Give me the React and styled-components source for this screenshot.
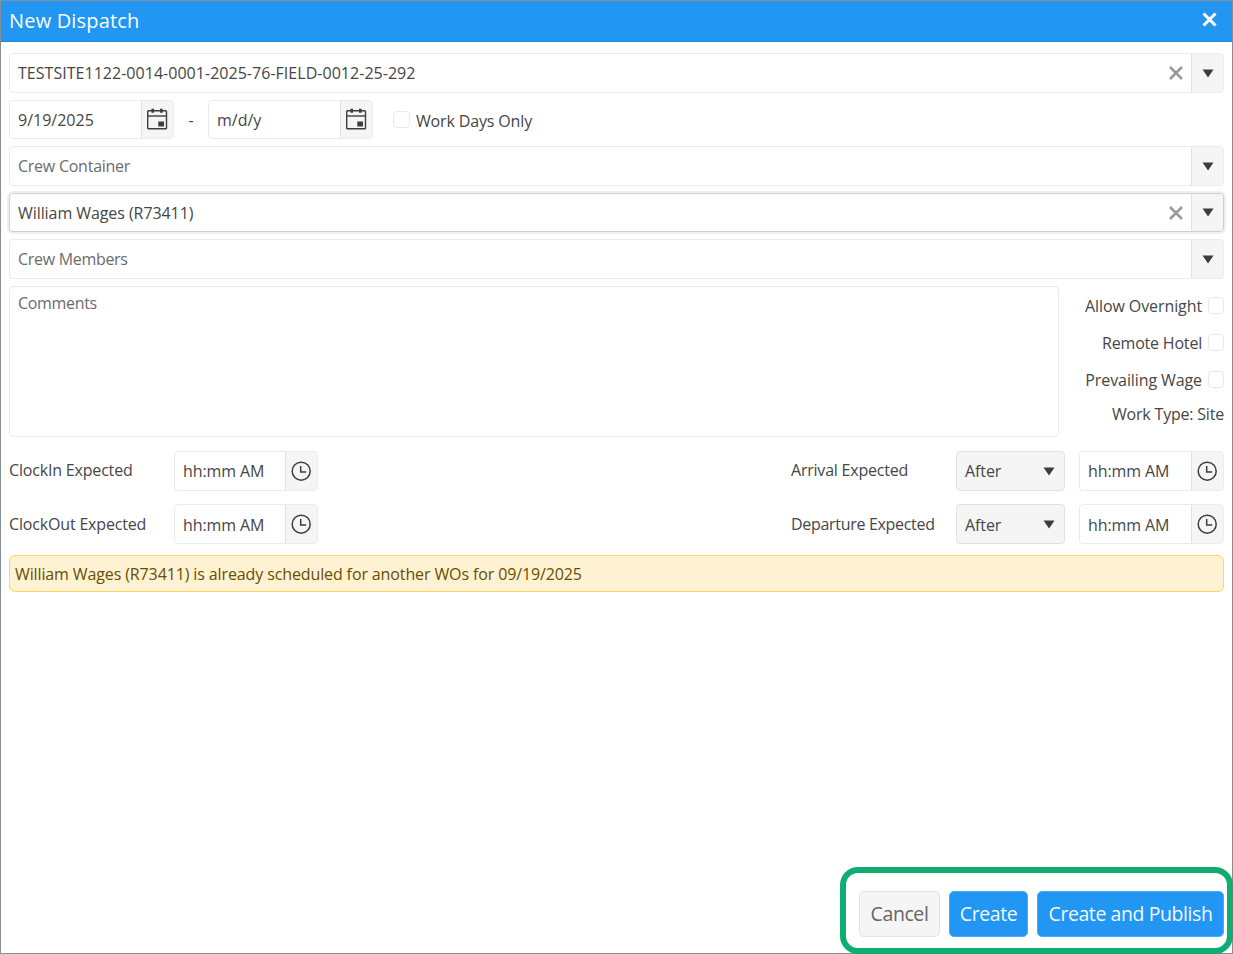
import React from "react";
import styled, { createGlobalStyle } from "styled-components";

const GlobalStyle = createGlobalStyle`
    * {
        box-sizing: border-box;
    }

    body {
        margin: 0;
        font-family: "Open Sans", "Noto Sans", sans-serif;
        font-size: 16px;
        color: #464646;
        background: #fff;
    }
`;

const Window = styled.div`
    width: 1233px;
    height: 954px;
    position: relative;
    display: flex;
    flex-direction: column;
    border: 1px solid #868e96;
    background: #fff;
`;

const TitleBar = styled.header`
    flex: 0 0 41px;
    display: flex;
    justify-content: space-between;
    align-items: center;
    padding: 0 15px 0 8px;
    color: #fff;
    background: #2196f3;
    border-bottom: 1px solid #1e88dc;

    svg {
        display: block;
        margin-bottom: 3px;
    }
`;

const Title = styled.h1`
    margin: 0;
    font-size: 20px;
    font-weight: 400;
    line-height: 26px;
    letter-spacing: 0.17px;
`;

const Text = styled.span`
    flex: 1 1 auto;
    padding-top: ${({$drop}) => $drop || 0}px;
    line-height: 20px;
    white-space: nowrap;
    letter-spacing: ${({$spacing}) => $spacing || 0}px;
    color: ${({$muted}) => ($muted ? "#6c6c6c" : "inherit")};
`;

const Content = styled.main`
    flex: 1;
    display: flex;
    flex-direction: column;
    padding: 11px 8px 0;
`;

const Field = styled.div`
    flex: 0 0 auto;
    width: ${({$width}) => ($width ? `${$width}px` : "auto")};
    height: ${({$height}) => $height || 40}px;
    display: flex;
    align-items: center;
    padding-left: 8px;
    border: 1px solid ${({$focused}) => ($focused ? "#cfcfcf" : "#ebebeb")};
    border-radius: 4px;
    box-shadow: ${({$focused}) => ($focused ? "0 0 0 2px #f0f0f0" : "none")};
    background: #fff;
`;

const FieldButton = styled.span`
    flex: 0 0 32px;
    align-self: stretch;
    display: flex;
    align-items: center;
    justify-content: center;
    padding-bottom: ${({$raised}) => ($raised ? 2 : 0)}px;
    background: #f5f5f5;
    border-left: 1px solid #e2e2e2;
    border-radius: 0 3px 3px 0;
`;

const Stack = styled.div`
    display: flex;
    flex-direction: column;
    gap: 7px;
`;

const DateRow = styled.div`
    display: flex;
    align-items: center;
    height: 39px;
`;

const Dash = styled.span`
    width: 34px;
    text-align: center;
`;

const ClearIcon = styled.svg`
    flex: none;
    display: block;
    margin-right: 8px;
`;

const Check = styled.label`
    display: flex;
    align-items: center;
    gap: 6px;
    height: 17px;
    margin-left: ${({$indent}) => $indent || 0}px;
`;

const Box = styled.span`
    flex: none;
    width: ${({$wide}) => ($wide ? 17 : 16)}px;
    height: 17px;
    border: 1px solid #e8e8e8;
    border-radius: 4px;
    background: #fff;
`;

const CommentsRow = styled.div`
    display: flex;
    justify-content: space-between;
    height: 151px;
`;

const Comments = styled.div`
    width: 1050px;
    padding: 6px 8px;
    display: flex;
    border: 1px solid #ebebeb;
    border-radius: 4px;
`;

const Options = styled.div`
    display: flex;
    flex-direction: column;
    align-items: flex-end;
    gap: 20px;
    padding-top: 11px;
`;

const WorkType = styled.div`
    margin-top: -4px;
    line-height: 20px;
`;

const Times = styled.div`
    display: grid;
    grid-template-columns: 165px 144px 473px 165px 109px 14px 145px;
    grid-auto-rows: 40px;
    row-gap: 13px;
    margin-top: 14px;
`;

const TimeLabel = styled.div`
    grid-column: ${({$column}) => $column};
    display: flex;
    align-items: center;
    padding-bottom: ${({$lift}) => $lift || 0}px;
`;

const TimeCell = styled.div`
    grid-column: ${({$column}) => $column};
`;

const Picker = styled.div`
    grid-column: 5;
    display: flex;
    align-items: center;
    padding: 0 9px 0 8px;
    background: #f5f5f5;
    border: 1px solid #e2e2e2;
    border-radius: 4px;
`;

const Alert = styled.div`
    height: 37px;
    margin-top: 11px;
    padding: 0 5px;
    display: flex;
    align-items: center;
    color: #664f00;
    background: #fff2d3;
    border: 1px solid #ffd760;
    border-radius: 6px;
`;

const Actions = styled.footer`
    position: absolute;
    right: -1px;
    bottom: -1px;
    width: 393px;
    height: 87px;
    display: flex;
    align-items: flex-start;
    gap: 9px;
    padding: 18px 3px 0 13px;
    border: 6px solid #0fae70;
    border-radius: 18px;
`;

const Button = styled.button`
    width: ${({$width}) => $width}px;
    height: 46px;
    padding: 0 0 2px;
    font-family: inherit;
    font-size: 19.5px;
    white-space: nowrap;
    letter-spacing: -0.42px;
    color: ${({$primary}) => ($primary ? "#f2f8ff" : "#666")};
    background: ${({$primary}) => ($primary ? "#2196f3" : "#f5f5f5")};
    border: 1px solid ${({$primary}) => ($primary ? "#4aaaf5" : "#e4e4e4")};
    border-radius: 5px;
`;

const Cross = () => (
    <svg width="15" height="15" viewBox="0 0 15 15" fill="none" stroke="#fff" strokeWidth="3">
        <path d="M1.5 1.5l12 12M13.5 1.5l-12 12"/>
    </svg>
);

const Clear = () => (
    <ClearIcon width="14" height="14" viewBox="0 0 14 14" fill="none" stroke="#999" strokeWidth="2.5">
        <path d="M1 1l12 12M13 1L1 13"/>
    </ClearIcon>
);

const Caret = () => (
    <svg width="12" height="9" viewBox="0 0 12 9" fill="#3d3d3d">
        <path d="M.5.5h11L6 8.5z"/>
    </svg>
);

const CalendarIcon = () => (
    <svg width="21" height="22" viewBox="0 0 21 22" fill="none" stroke="#3d3d3d" strokeWidth="1.4">
        <rect x=".7" y="2.7" width="18.8" height="18" rx=".8"/>
        <path d="M1 8h18.4"/>
        <path d="M5.8 .8v4M14.3 .8v4" strokeWidth="2.6"/>
        <path d="M11.3 13.5h5.7v5h-5.7z" fill="#3d3d3d" stroke="none"/>
    </svg>
);

const ClockIcon = () => (
    <svg width="21" height="20" viewBox="0 0 21 20" fill="none" stroke="#3d3d3d" strokeWidth="1.5">
        <circle cx="10.2" cy="10.2" r="9"/>
        <path d="M9.7 5v6h5.5"/>
    </svg>
);

const ComboBox = ({value, placeholder, spacing, height, focused}) => (
    <Field $height={height} $focused={focused}>
        <Text $muted={!value} $spacing={spacing}>{value || placeholder}</Text>
        {value && <Clear/>}
        <FieldButton><Caret/></FieldButton>
    </Field>
);

const DateField = ({text}) => (
    <Field $width={165} $height={39}>
        <Text $drop={1}>{text}</Text>
        <FieldButton $raised><CalendarIcon/></FieldButton>
    </Field>
);

const TimeField = ({column, drop}) => (
    <TimeCell $column={column}>
        <Field>
            <Text $spacing={-0.12} $drop={drop}>hh:mm AM</Text>
            <FieldButton><ClockIcon/></FieldButton>
        </Field>
    </TimeCell>
);

const options = [
    {label: "Allow Overnight", spacing: -0.1},
    {label: "Remote Hotel", spacing: -0.2},
    {label: "Prevailing Wage", spacing: -0.1},
];

const times = [
    {
        left: {label: "ClockIn Expected", spacing: -0.18},
        right: {label: "Arrival Expected", spacing: -0.22},
        lift: 3,
        drop: 0,
    },
    {
        left: {label: "ClockOut Expected", spacing: -0.17},
        right: {label: "Departure Expected", spacing: -0.31},
        lift: 1,
        drop: 2,
    },
];

const App = () => (
    <>
        <GlobalStyle/>
        <Window>
            <TitleBar>
                <Title>New Dispatch</Title>
                <Cross/>
            </TitleBar>

            <Content>
                <Stack>
                    <ComboBox value="TESTSITE1122-0014-0001-2025-76-FIELD-0012-25-292" spacing={0.03}/>
                    <DateRow>
                        <DateField text="9/19/2025"/>
                        <Dash>-</Dash>
                        <DateField text="m/d/y"/>
                        <Check $indent={20}>
                            <Box $wide/>
                            <Text $spacing={-0.15} $drop={2}>Work Days Only</Text>
                        </Check>
                    </DateRow>
                    <ComboBox placeholder="Crew Container" spacing={-0.25}/>
                    <ComboBox value="William Wages (R73411)" spacing={-0.07} height={39} focused/>
                    <ComboBox placeholder="Crew Members" spacing={-0.3}/>
                    <CommentsRow>
                        <Comments><Text $muted $spacing={-0.32}>Comments</Text></Comments>
                        <Options>
                            {options.map(({label, spacing}) => (
                                <Check key={label}>
                                    <Text $spacing={spacing}>{label}</Text>
                                    <Box/>
                                </Check>
                            ))}
                            <WorkType><Text $spacing={-0.2}>Work Type: Site</Text></WorkType>
                        </Options>
                    </CommentsRow>
                </Stack>

                <Times>
                    {times.map(({left, right, lift, drop}) => (
                        <React.Fragment key={left.label}>
                            <TimeLabel $column={1} $lift={lift}>
                                <Text $spacing={left.spacing}>{left.label}</Text>
                            </TimeLabel>
                            <TimeField column={2} drop={drop}/>
                            <TimeLabel $column={4} $lift={lift}>
                                <Text $spacing={right.spacing}>{right.label}</Text>
                            </TimeLabel>
                            <Picker><Text $spacing={-0.1} $drop={drop}>After</Text><Caret/></Picker>
                            <TimeField column={7} drop={drop}/>
                        </React.Fragment>
                    ))}
                </Times>

                <Alert>
                    <Text $spacing={-0.12}>William Wages (R73411) is already scheduled for another WOs for 09/19/2025</Text>
                </Alert>
            </Content>

            <Actions>
                <Button $width={81}>Cancel</Button>
                <Button $width={79} $primary>Create</Button>
                <Button $width={187} $primary>Create and Publish</Button>
            </Actions>
        </Window>
    </>
);

export default App;
